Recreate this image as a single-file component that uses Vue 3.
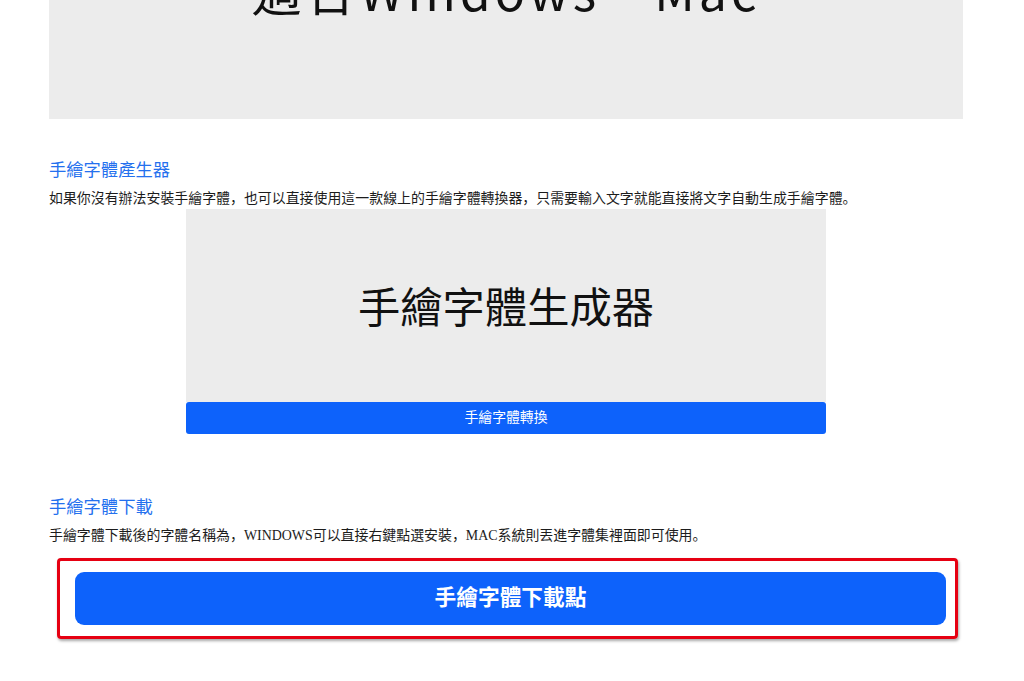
<script setup>
</script>

<template>
  <div class="page">
    <div class="hero">
      <div class="hero-text">適合Windows、Mac</div>
    </div>

    <section class="gen">
      <h3 class="title">手繪字體產生器</h3>
      <p class="desc">如果你沒有辦法安裝手繪字體，也可以直接使用這一款線上的手繪字體轉換器，只需要輸入文字就能直接將文字自動生成手繪字體。</p>
      <div class="tool">
        <div class="tool-pic"><span>手繪字體生成器</span></div>
        <div class="tool-btn">手繪字體轉換</div>
      </div>
    </section>

    <section class="dl">
      <h3 class="title">手繪字體下載</h3>
      <p class="desc">手繪字體下載後的字體名稱為，WINDOWS可以直接右鍵點選安裝，MAC系統則丟進字體集裡面即可使用。</p>
      <div class="mark">
        <div class="dl-btn">手繪字體下載點</div>
      </div>
    </section>
  </div>
</template>

<style scoped>
.page {
  width: 1024px;
  height: 681px;
  overflow: hidden;
  padding: 0 61px 0 49px;
  box-sizing: border-box;
  background: #fff;
  font-family: "Liberation Serif", "Noto Sans CJK SC", serif;
  color: #1c1c1c;
}
.hero {
  height: 119px;
  margin-bottom: 41px;
  background: #ececec;
  display: flex;
  justify-content: center;
  overflow: hidden;
}
.hero-text {
  margin-top: -36px;
  height: 50px;
  font: 400 50px/50px "Noto Sans CJK TC", sans-serif;
  letter-spacing: 4px;
  color: #111;
  white-space: nowrap;
}
.title {
  margin: 0;
  font: 400 17.3px/18px "Noto Sans CJK SC", sans-serif;
  color: #2470ee;
}
.desc {
  margin: 11px 0 1px;
  font-size: 13.93px;
  line-height: 19px;
  white-space: nowrap;
}
.tool {
  width: 640px;
  margin: 0 auto;
}
.tool-pic {
  height: 193px;
  background: #ececec;
  display: flex;
  align-items: center;
  justify-content: center;
}
.tool-pic span {
  font: 400 42.3px/1 "Noto Sans CJK TC", sans-serif;
  color: #111;
}
.tool-btn {
  height: 32px;
  background: #0d62fb;
  border-radius: 3px;
  color: #fff;
  font-size: 13.85px;
  line-height: 32px;
  text-align: center;
}
.gen { margin-bottom: 63px; }
.mark {
  width: 901px;
  height: 81px;
  margin: 13px 0 0 8px;
  box-sizing: border-box;
  border: 3px solid #e60012;
  border-radius: 4px;
  box-shadow: 1px 2px 3px rgba(0, 0, 0, 0.35);
  padding: 11px 9px 11px 15px;
}
.dl-btn {
  height: 53px;
  background: #0d62fb;
  border-radius: 9px;
  color: #fff;
  font-size: 21.7px;
  font-weight: 700;
  line-height: 53px;
  text-align: center;
}
</style>
